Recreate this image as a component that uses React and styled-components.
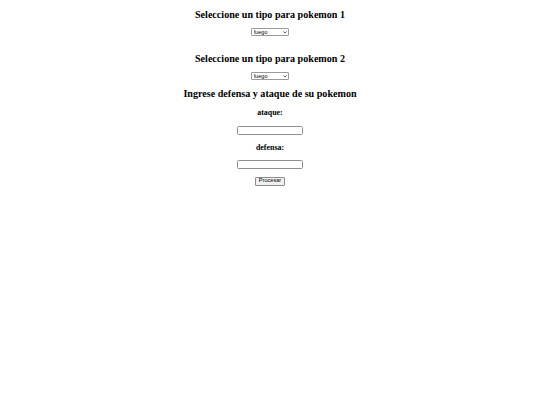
import React from 'react';
import styled, { createGlobalStyle } from 'styled-components';

// the reference is a 1280px page shown at 540px, so every size is scaled by 0.42
const GlobalStyle = createGlobalStyle`
    body {
        margin: 3.4px;
        background: #ffffff;
        font-family: "Liberation Serif", "Times New Roman", serif;
        font-size: 6.75px;
        color: #000000;
    }
`;

const Page = styled.main`
    text-align: center;
`;

const Title = styled.h2`
    margin: ${props => props.$top || 7.4}px 0 7.4px;
    font-size: 10.1px;
    font-weight: bold;
    line-height: 1.15;
`;

const Label = styled.h3`
    margin: 8.4px 0;
    font-size: 7.9px;
    font-weight: bold;
    line-height: 1.15;
`;

const Field = styled.div`
    height: 9px;
    margin-bottom: ${props => props.$gap || 0}px;
    display: flex;
    justify-content: center;
    align-items: center;
`;

const SelectBox = styled.div`
    position: relative;
    width: 38px;
    height: 8px;
`;

const Select = styled.select`
    box-sizing: border-box;
    width: 100%;
    height: 100%;
    padding: 0 0 0 1.5px;
    appearance: none;
    font-family: "Liberation Sans", Arial, sans-serif;
    font-size: 5.6px;
    color: #000000;
    background: #ffffff;
    border: 1px solid #9a9a9a;
    border-radius: 1px;
    outline: none;
`;

const Chevron = styled.svg`
    position: absolute;
    right: 2.5px;
    top: 2.8px;
    width: 4px;
    height: 2.5px;
    pointer-events: none;
`;

const Input = styled.input`
    box-sizing: border-box;
    width: 66px;
    height: 9px;
    padding: 0 1px;
    font-family: "Liberation Sans", Arial, sans-serif;
    font-size: 5.6px;
    background: #ffffff;
    border: 1px solid #8f8f8f;
    border-radius: 1.5px;
    outline: none;
`;

const ButtonRow = styled.p`
    margin: 7.25px 0;
    display: flex;
    justify-content: center;
`;

const Button = styled.button`
    box-sizing: border-box;
    width: 30px;
    height: 9px;
    padding: 0;
    font-family: "Liberation Sans", Arial, sans-serif;
    font-size: 5.6px;
    line-height: 1;
    color: #000000;
    background: #efefef;
    border: 1px solid #8f8f8f;
    border-radius: 1px;
`;

const tipos = ['fuego', 'agua', 'planta', 'electrico'];

function TipoSelect() {
    return (
        <SelectBox>
            <Select defaultValue="fuego">
                { tipos.map(tipo => <option key={ tipo } value={ tipo }>{ tipo }</option>) }
            </Select>
            <Chevron viewBox="0 0 8 5">
                <polyline points="0.8,0.8 4,4 7.2,0.8" fill="none" stroke="#222" strokeWidth="1.4" />
            </Chevron>
        </SelectBox>
    );
}

export default function App() {
    return (
        <Page>
            <GlobalStyle />
            <Title $top={ 5.4 }>Seleccione un tipo para pokemon 1</Title>
            <Field $gap={ 16 }>
                <TipoSelect />
            </Field>
            <Title>Seleccione un tipo para pokemon 2</Title>
            <Field>
                <TipoSelect />
            </Field>
            <Title>Ingrese defensa y ataque de su pokemon</Title>
            <Label>ataque:</Label>
            <Field>
                <Input type="text" />
            </Field>
            <Label>defensa:</Label>
            <Field>
                <Input type="text" />
            </Field>
            <ButtonRow>
                <Button type="button">Procesar</Button>
            </ButtonRow>
        </Page>
    );
}
